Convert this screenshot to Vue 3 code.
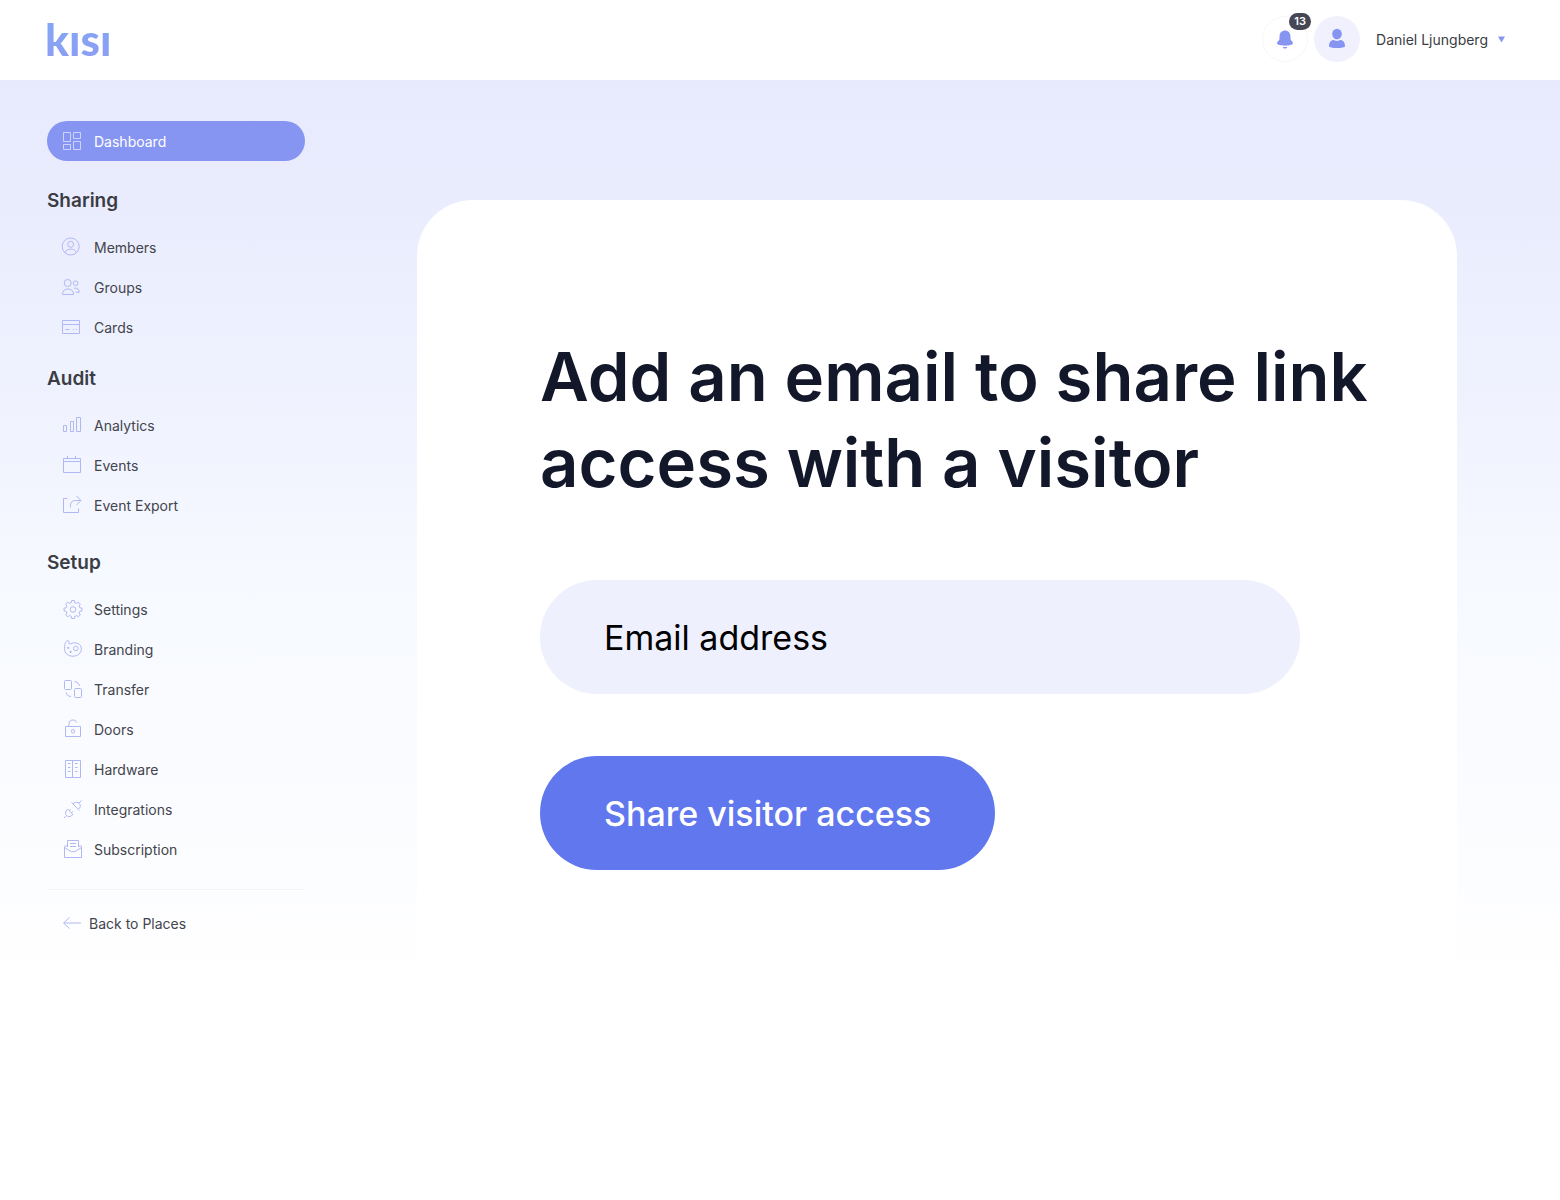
<template>
  <div class="page">
    <header class="topbar">
      <a href="#" class="logo">kısı</a>
      <div class="account">
        <button class="round-btn bell-btn" aria-label="Notifications">
          <svg width="22" height="22" viewBox="0 0 22 22">
            <path d="M11 2.4c3.1 0 5.300 2.300 5.400 5.300l.2 3.600c.1 1.400 2.400 2.200 2.400 3.800 0 1.900-3.900 2.600-8 2.600s-8-.7-8-2.600c0-1.600 2.300-2.400 2.400-3.800l.2-3.600c.1-3 2.300-5.300 5.400-5.300z" />
            <path d="M8.800 18.900h4.400c-.3 1-1.100 1.600-2.200 1.600s-1.900-.6-2.200-1.600z" />
          </svg>
          <span class="badge">13</span>
        </button>
        <button class="round-btn avatar-btn" aria-label="Profile">
          <svg width="22" height="22" viewBox="0 0 22 22">
            <ellipse cx="11" cy="6" rx="4.800" ry="5.300" />
            <path d="M3 18.200c0-4 2.200-6.200 4.500-6.200 1 0 1.800.9 3.500.9s2.500-.9 3.500-.9c2.300 0 4.500 2.200 4.500 6.200 0 1.200-3.500 1.800-8 1.800s-8-.6-8-1.800z" />
          </svg>
        </button>
        <button class="user-menu">
          Daniel Ljungberg
          <svg width="7" height="7" viewBox="0 0 7 7"><path d="M0 .5h7L3.500 6.500z" /></svg>
        </button>
      </div>
    </header>

    <div class="content">
      <nav class="sidebar">
        <a href="#" class="nav-item active">
          <svg class="icon" viewBox="0 0 22 22"><path :d="icons.dashboard" /></svg>
          Dashboard
        </a>

        <section v-for="s in sections" :key="s.title" class="section">
          <h2 class="section-title">{{ s.title }}</h2>
          <a v-for="item in s.items" :key="item.label" href="#" class="nav-item">
            <svg class="icon" viewBox="0 0 22 22"><path :d="icons[item.icon]" /></svg>
            {{ item.label }}
          </a>
        </section>

        <a href="#" class="back-link">
          <svg class="icon" viewBox="0 0 22 22"><path :d="icons.back" /></svg>
          Back to Places
        </a>
      </nav>

      <main class="main">
        <form class="card" @submit.prevent>
          <h1 class="card-title">Add an email to share link access with a visitor</h1>
          <input
            v-model="email"
            class="email-input"
            type="email"
            placeholder="Email address"
            aria-label="Email address"
          />
          <button type="submit" class="share-btn">Share visitor access</button>
        </form>
      </main>
    </div>
  </div>
</template>

<script setup>
import { ref } from 'vue'

const email = ref('')

const sections = [
  {
    title: 'Sharing',
    items: [
      { label: 'Members', icon: 'members' },
      { label: 'Groups', icon: 'groups' },
      { label: 'Cards', icon: 'cards' }
    ]
  },
  {
    title: 'Audit',
    items: [
      { label: 'Analytics', icon: 'analytics' },
      { label: 'Events', icon: 'events' },
      { label: 'Event Export', icon: 'export' }
    ]
  },
  {
    title: 'Setup',
    items: [
      { label: 'Settings', icon: 'settings' },
      { label: 'Branding', icon: 'branding' },
      { label: 'Transfer', icon: 'transfer' },
      { label: 'Doors', icon: 'doors' },
      { label: 'Hardware', icon: 'hardware' },
      { label: 'Integrations', icon: 'integrations' },
      { label: 'Subscription', icon: 'subscription' }
    ]
  }
]

// 22x22 outlines, stroked
const icons = {
  dashboard: 'M2.500 2.500h7v9h-7zM12.500 2.500h7v6h-7zM2.500 14.500h7v5h-7zM12.500 11.500h7v8h-7z',
  members: 'M1.200 10.500a8.500 8.500 0 1 0 17 0a8.500 8.500 0 1 0-17 0M6.700 8.300a3 3 0 1 0 6 0a3 3 0 1 0-6 0M4 16.700c.8-2.500 3-3.600 5.700-3.600s4.900 1.100 5.700 3.600',
  groups: 'M3.200 7a3.500 3.500 0 1 0 7 0a3.500 3.500 0 1 0-7 0M12.300 7.200a2.300 2.300 0 1 0 4.600 0a2.300 2.300 0 1 0-4.600 0M1.500 18.500c0-3.500 2-5.500 5.500-5.500s5.500 2 5.500 5.500zM13 12.200c3.200-.5 5 .8 5.300 4h-3.600',
  cards: 'M1.500 4.500h17v13h-17zM1.500 8.500h17M4.500 13.500h4M12 13.500h1M15 13.500h1',
  analytics: 'M2.500 11.500h3v6h-3zM9.500 7.500h3v10h-3zM15.500 3.500h4v14h-4z',
  events: 'M2.500 4.500h17v14h-17zM2.500 7.500h17M6.500 2v2.500M14.500 2v2.500',
  export: 'M6.500 4.500h-4v14h15v-4M9.500 13.500v-2c0-3.500 2-5 5-5h5M15.500 2l4.500 4.500-4.500 4.500',
  settings: 'M10.700 2.500h2.600l.5 2.200 1.700.7 1.900-1.200 1.900 1.900-1.200 1.900.7 1.700 2.200.5v2.600l-2.200.5-.7 1.700 1.200 1.900-1.900 1.900-1.900-1.200-1.700.7-.5 2.200h-2.600l-.5-2.200-1.700-.7-1.900 1.200-1.900-1.900 1.200-1.900-.7-1.700-2.200-.5v-2.600l2.200-.5.7-1.700-1.200-1.900 1.900-1.900 1.900 1.200 1.700-.7zM9.200 11.500a2.800 2.800 0 1 0 5.600 0a2.800 2.800 0 1 0-5.600 0',
  branding: 'M5.500 3.200c1.500-1.400 3.300-.2 2.400 1.500-.5 1.200.8 1.700 2.100 1 5-2.400 10.300.2 10.300 5 0 4.500-3.600 7.500-8.300 7.500-5 0-8.500-3-8.500-7.500 0-3 .5-6 2-7.500zM12.500 10.500a2.300 2.300 0 1 0 4.600 0a2.300 2.300 0 1 0-4.600 0M6.600 9.200h1.200v1.200h-1.200zM9 13.300h1.200v1.200h-1.200z',
  transfer: 'M4.500 2.500h5q1 0 1 1v7q0 1-1 1h-5q-1 0-1-1v-7q0-1 1-1zM14.500 10.500h5q1 0 1 1v7q0 1-1 1h-5q-1 0-1-1v-7q0-1 1-1zM13.500 3.500c2.700.4 4.500 1.800 5 4.500M5 14.500c.5 2.500 2.200 3.800 5 4',
  doors: 'M4.500 8.500h15v10h-15zM8 8.500v-3c0-4.500 7-4.500 7.500-1M10.300 13.300a1.700 1.700 0 1 0 3.400 0a1.700 1.700 0 1 0-3.400 0',
  hardware: 'M4.500 2.500h15v17h-15zM11.500 2.500v17M7 5.500h2.500M7 9.500h2.500M7 13.500h2.500M14 5.500h2.500M14 9.500h2.500M14 13.500h2.500',
  integrations: 'M3 20l2.500-2.500M6.500 11l5.500 5.500-1.600 1.200c-1.600 1.300-3.500 1.200-4.800-.1s-1.500-3.300-.2-4.800zM8.200 12.700l1.600-1.600M10.300 14.800l1.600-1.600M18 5l2.500-2.500M11.500 5.500l6 6 1-1.300c1.200-1.600 1-3.500-.3-4.800s-3.300-1.500-4.800-.4zM10.500 4.500l1 1M17.500 11.500l1 1',
  subscription: 'M6.500 9v-6.500h11v6.500M3.500 8.500v11h17v-11M6.500 8h-3M17.500 8h3M3.500 9.500l5.500 3.500c2 1 4 1 6 0l5.500-3.500M9 5.500h6M9 8.500h6',
  back: 'M20 11h-17M8.500 5.500l-6 5.500 6 5.500'
}
</script>

<style>
body {
  background-color: #fff;
}
</style>

<style scoped>
.page {
  min-height: 100vh;
  font-family: Inter, "Liberation Sans", sans-serif;
  color: #43444c;
  display: flex;
  flex-direction: column;
}

.page *,
.page {
  box-sizing: border-box;
}

.topbar {
  height: 80px;
  padding: 0 55px 2px 45px;
  display: flex;
  align-items: center;
  justify-content: space-between;
}

.logo {
  font-family: Lato, "Open Sans", sans-serif;
  font-size: 44px;
  font-weight: 900;
  line-height: 48px;
  text-decoration: none;
  color: transparent;
  background: linear-gradient(#82a8f4, #8d9df3);
  background-clip: text;
}

.account {
  display: flex;
  align-items: center;
  gap: 6px;
}

button {
  font-family: inherit;
  border: none;
  padding: 0;
  cursor: pointer;
}

.round-btn {
  position: relative;
  width: 46px;
  height: 46px;
  border-radius: 50%;
  display: flex;
  align-items: center;
  justify-content: center;
}

.round-btn svg,
.user-menu svg {
  fill: #8795f2;
}

.bell-btn {
  background-color: #fff;
  border: 1px solid #f7f7fc;
}

.avatar-btn {
  background-color: #f1f1fd;
}

.badge {
  position: absolute;
  top: -4px;
  right: -4px;
  width: 22px;
  height: 17px;
  border-radius: 9px;
  background-color: #454754;
  color: #fff;
  font-size: 11px;
  font-weight: 600;
  line-height: 17px;
}

.user-menu {
  margin-left: 10px;
  display: flex;
  align-items: center;
  gap: 10px;
  background: none;
  color: #3b3c44;
  font-size: 14px;
}

.content {
  flex: 1;
  display: grid;
  grid-template-columns: 258px 1fr;
  gap: 112px;
  padding: 41px 103px 0 47px;
  background: linear-gradient(#e7e9fd 0, #eef1fe 280px, #f6f9ff 500px, #fbfcff 720px, #fff 920px);
}

.nav-item,
.back-link {
  height: 40px;
  padding-left: 14px;
  display: flex;
  align-items: center;
  gap: 11px;
  font-size: 14px;
  color: #43444c;
  text-decoration: none;
}

.nav-item.active {
  border-radius: 20px;
  background-color: #8795f2;
  color: #fff;
}

.icon {
  width: 22px;
  height: 22px;
  flex-shrink: 0;
  fill: none;
  stroke: #b0b8f3;
}

.active .icon {
  stroke: #ccd3fb;
}

.section {
  margin-top: 20px;
}

.nav-item + .section,
.section:last-of-type {
  margin-top: 28px;
}

.section:last-of-type {
  margin-top: 26px;
}

.section-title {
  margin: 0 0 14px;
  font-size: 19px;
  line-height: 24px;
  font-weight: 600;
  color: #3b3c44;
}

.back-link {
  margin-top: 20px;
  padding-top: 22px;
  height: auto;
  gap: 6px;
  border-top: 1px solid #f3f4f9;
}

.main {
  padding-top: 79px;
  display: flex;
}

.card {
  flex: 1;
  padding: 134px 72px 80px 123px;
  border-radius: 56px 56px 0 0;
  background-color: #fff;
}

.card-title {
  margin: 0 0 74px;
  font-size: 67px;
  line-height: 86px;
  font-weight: 600;
  color: #13172a;
}

.email-input,
.share-btn {
  display: block;
  height: 114px;
  padding: 0 64px;
  border: none;
  border-radius: 57px;
  font-family: inherit;
  font-size: 34px;
}

.email-input {
  width: 100%;
  max-width: 760px;
  margin-bottom: 62px;
  background-color: #eff0fd;
  color: #000;
  outline: none;
}

.email-input::placeholder {
  color: #000;
  opacity: 1;
}

.share-btn {
  background-color: #6177ed;
  color: #fff;
  font-weight: 500;
}
</style>
